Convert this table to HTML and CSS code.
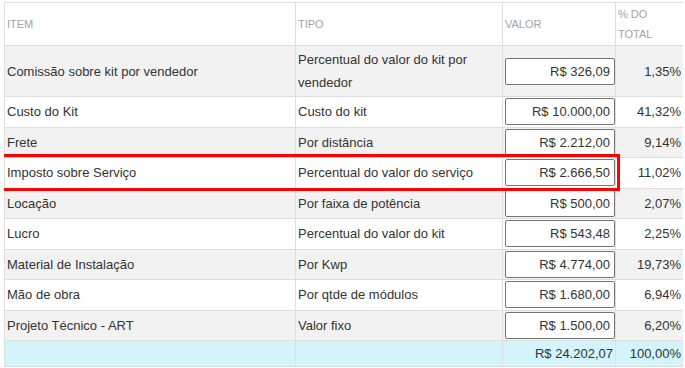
FILE: index.html
```html
<!DOCTYPE html>
<html lang="pt-BR">
<head>
  <meta charset="UTF-8">
  <meta name="viewport" content="width=device-width, initial-scale=1">
  <title>Custos do Projeto</title>
  <link rel="stylesheet" href="styles.css">
</head>
<body>
  <div class="quadro">
    <table class="custos">
      <colgroup>
        <col class="c-item">
        <col class="c-tipo">
        <col class="c-valor">
        <col class="c-pct">
      </colgroup>
      <thead>
        <tr>
          <th>Item</th>
          <th>Tipo</th>
          <th>Valor</th>
          <th>% do total</th>
        </tr>
      </thead>
      <tbody>
        <tr>
          <td>Comissão sobre kit por vendedor</td>
          <td>Percentual do valor do kit por vendedor</td>
          <td><input type="text" value="R$ 326,09"></td>
          <td class="pct">1,35%</td>
        </tr>
        <tr>
          <td>Custo do Kit</td>
          <td>Custo do kit</td>
          <td><input type="text" value="R$ 10.000,00"></td>
          <td class="pct">41,32%</td>
        </tr>
        <tr>
          <td>Frete</td>
          <td>Por distância</td>
          <td><input type="text" value="R$ 2.212,00"></td>
          <td class="pct">9,14%</td>
        </tr>
        <tr>
          <td>Imposto sobre Serviço</td>
          <td>Percentual do valor do serviço</td>
          <td><input type="text" value="R$ 2.666,50"></td>
          <td class="pct">11,02%</td>
        </tr>
        <tr>
          <td>Locação</td>
          <td>Por faixa de potência</td>
          <td><input type="text" value="R$ 500,00"></td>
          <td class="pct">2,07%</td>
        </tr>
        <tr>
          <td>Lucro</td>
          <td>Percentual do valor do kit</td>
          <td><input type="text" value="R$ 543,48"></td>
          <td class="pct">2,25%</td>
        </tr>
        <tr>
          <td>Material de Instalação</td>
          <td>Por Kwp</td>
          <td><input type="text" value="R$ 4.774,00"></td>
          <td class="pct">19,73%</td>
        </tr>
        <tr>
          <td>Mão de obra</td>
          <td>Por qtde de módulos</td>
          <td><input type="text" value="R$ 1.680,00"></td>
          <td class="pct">6,94%</td>
        </tr>
        <tr>
          <td>Projeto Técnico - ART</td>
          <td>Valor fixo</td>
          <td><input type="text" value="R$ 1.500,00"></td>
          <td class="pct">6,20%</td>
        </tr>
      </tbody>
      <tfoot>
        <tr>
          <td></td>
          <td></td>
          <td class="pct">R$ 24.202,07</td>
          <td class="pct">100,00%</td>
        </tr>
      </tfoot>
    </table>
    <!-- marcação em volta da linha do imposto -->
    <div class="destaque"></div>
  </div>
</body>
</html>
```

FILE: styles.css
```css
body {
  margin: 2px 2px 0 4px;
  background-color: #fff;
  font-family: "Liberation Sans", Arial, sans-serif;
  font-size: 13px;
  color: #333;
}
.quadro {
  position: relative;
}
.custos {
  width: 679px;
  border-collapse: collapse;
  table-layout: fixed;
}
.c-item { width: 291px; }
.c-tipo { width: 207px; }
.c-valor { width: 113px; }
.c-pct { width: 68px; }
.custos th,
.custos td {
  border: 1px solid #dedede;
  padding: 1.25px 2px;
  line-height: 23px;
  text-align: left;
  vertical-align: middle;
}
.custos th {
  padding: 1px 2px;
  font-size: 11px;
  font-weight: normal;
  line-height: 20px;
  color: #a3a3a3;
  text-transform: uppercase;
}
.custos tbody tr:nth-child(odd) {
  background-color: #f2f2f2;
}
.custos tbody tr:first-child td {
  padding-top: 2px;
  padding-bottom: 2px;
}
.custos td.pct {
  text-align: right;
}
.custos input {
  display: block;
  box-sizing: border-box;
  width: 110px;
  height: 27px;
  margin: 0;
  padding: 0 4px;
  border: 1px solid #767676;
  border-radius: 2px;
  background-color: #fff;
  font-family: inherit;
  font-size: 13px;
  color: #333;
  text-align: right;
}
.custos tfoot td {
  background-color: #d2f4fa;
  padding: 1px 2px;
}
.destaque {
  position: absolute;
  left: -3px;
  top: 152px;
  width: 613px;
  height: 31px;
  border: 3px solid #f00;
  pointer-events: none;
}
```
